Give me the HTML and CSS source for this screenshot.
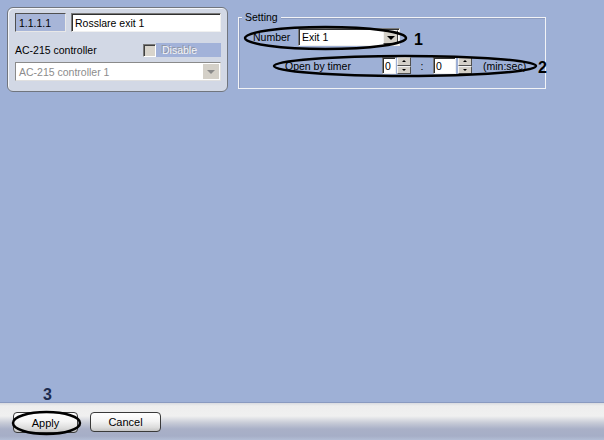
FILE: index.html
```html
<!DOCTYPE html>
<html lang="en">
  <head>
    <meta charset="UTF-8" />
    <title>Rosslare exit settings</title>
    <link rel="stylesheet" href="styles.css">
  </head>
  <body>
    <div class="window">
      <div class="content">
        <!-- Object panel -->
        <div class="panel">
          <div class="prow">
            <span class="idbox">1.1.1.1</span>
            <span class="field name">Rosslare exit 1</span>
          </div>
          <div class="prow ctrl">
            <span class="ctrl-label">AC-215 controller</span>
            <span class="check"></span>
            <span class="disable">Disable</span>
          </div>
          <div class="combo off">
            <span class="combo-text">AC-215 controller 1</span>
            <span class="combo-btn"><span class="arrow"></span></span>
          </div>
        </div>

        <!-- Setting group -->
        <div class="group">
          <span class="legend">Setting</span>
          <div class="grow number">
            <span class="glabel">Number</span>
            <div class="combo exit">
              <span class="combo-text">Exit 1</span>
              <span class="combo-btn"><span class="arrow"></span></span>
            </div>
          </div>
          <div class="grow timer">
            <span class="glabel wide">Open by timer</span>
            <span class="field spin-in small">0</span>
            <span class="spin"><span class="half up"></span><span class="half down"></span></span>
            <span class="colon">:</span>
            <span class="field spin-in">0</span>
            <span class="spin sec"><span class="half up"></span><span class="half down"></span></span>
            <span class="unit">(min:sec)</span>
          </div>
        </div>
      </div>

      <div class="footer">
        <button class="btn apply">Apply</button>
        <button class="btn cancel">Cancel</button>
      </div>

      <!-- callout marks drawn over the dialog -->
      <svg class="marks" width="604" height="440" viewBox="0 0 604 440">
        <ellipse cx="325.5" cy="38" rx="80.5" ry="11" />
        <ellipse cx="405" cy="66" rx="131" ry="10" />
        <ellipse cx="46.5" cy="423" rx="33.5" ry="11" />
        <text x="414" y="45">1</text>
        <text x="538" y="73">2</text>
        <text x="43" y="400" class="n3">3</text>
      </svg>
    </div>
  </body>
</html>
```

FILE: styles.css
```css
body {
  margin: 0;
  font-family: "Liberation Sans", Arial, sans-serif;
  font-size: 10.5px;
  color: #000;
}
.window {
  position: relative;
  width: 604px;
  height: 440px;
  background-color: #9eb0d6;
  overflow: hidden;
}
.content {
  height: 402px;
  display: flex;
  align-items: flex-start;
  gap: 10px;
  padding: 7px 0 0 7px;
  box-sizing: border-box;
}

/* left panel */
.panel {
  width: 221px;
  box-sizing: border-box;
  padding: 5px 6px 10px 7px;
  background-color: #d2d8e5;
  border: 1px solid #70757e;
  border-radius: 6px;
  box-shadow: inset 1px 1px 0 #f4f6fa;
}
.prow {
  display: flex;
  gap: 5px;
  height: 19px;
}
.field {
  display: flex;
  align-items: center;
  box-sizing: border-box;
  background-color: #fff;
  border: 1px solid;
  border-color: #7a7a7a #f0f0f0 #f0f0f0 #7a7a7a;
  box-shadow: inset 1px 1px 0 #303030;
  padding-left: 3px;
}
.idbox {
  display: flex;
  align-items: center;
  width: 51px;
  box-sizing: border-box;
  padding-left: 3px;
  background-color: #a7b5d8;
  border: 1px solid;
  border-color: #505050 #e8e8e8 #e8e8e8 #505050;
}
.name {
  width: 150px;
}
.prow.ctrl {
  margin-top: 11px;
  height: 14px;
  gap: 0;
  align-items: center;
}
.ctrl-label {
  flex: 1;
}
.check {
  width: 13px;
  height: 13px;
  box-sizing: border-box;
  background-color: #d8d4cc;
  border: 1px solid;
  border-color: #7a7a7a #fff #fff #7a7a7a;
  box-shadow: inset 1px 1px 0 #404040;
}
.disable {
  width: 65px;
  height: 14px;
  line-height: 14px;
  padding-left: 6px;
  box-sizing: border-box;
  background-color: #a2b2d9;
  color: #f4f4f4;
  text-shadow: -1px -1px 0 #8d93a0;
}

/* combo boxes */
.combo {
  display: flex;
  box-sizing: border-box;
  background-color: #fff;
  border: 1px solid;
  border-color: #7a7a7a #f0f0f0 #f0f0f0 #7a7a7a;
  box-shadow: inset 1px 1px 0 #303030;
  padding: 1px 1px 1px 2px;
}
.combo-text {
  flex: 1;
  display: flex;
  align-items: center;
  padding-left: 1px;
}
.combo-btn {
  width: 15px;
  display: flex;
  align-items: center;
  justify-content: center;
  background-color: #d4d0c8;
  border: 1px solid;
  border-color: #f4f4f4 #404040 #404040 #f4f4f4;
  box-sizing: border-box;
}
.arrow {
  border-left: 4px solid transparent;
  border-right: 4px solid transparent;
  border-top: 4px solid #000;
  margin-top: 1px;
}
.combo.off {
  margin-top: 5px;
  height: 19px;
  border-color: #8a8a8a #e0e0e0 #e0e0e0 #8a8a8a;
  box-shadow: none;
}
.combo.off .combo-text {
  color: #8c8c8c;
}
.combo.off .combo-btn {
  width: 16px;
  border-color: #d4d0c8;
}
.combo.off .arrow {
  border-top-color: #8a8a8a;
}

/* Setting group */
.group {
  position: relative;
  width: 308px;
  height: 72px;
  margin-top: 10px;
  box-sizing: border-box;
  border: 1px solid #f2f3f6;
  box-shadow: inset 1px 1px 0 #8d9cc0;
  padding: 10px 0 0 14px;
}
.legend {
  position: absolute;
  top: -7px;
  left: 3px;
  padding: 0 3px;
  line-height: 13px;
  background-color: #9eb0d6;
}
.grow {
  display: flex;
  align-items: stretch;
}
.grow.number {
  height: 18px;
}
.glabel {
  width: 45px;
  display: flex;
  align-items: center;
}
.glabel.wide {
  width: 97px;
}
.combo.exit {
  width: 102px;
}
.grow.timer {
  height: 17px;
  margin: 11px 0 0 32px;
}
.spin-in {
  width: 23px;
  padding-left: 2px;
}
.spin-in.small {
  width: 14px;
}
.spin {
  display: flex;
  flex-direction: column;
  width: 14px;
  margin-left: 1px;
}
.spin.sec {
  margin-left: 2px;
}
.half {
  flex: 1;
  display: flex;
  align-items: center;
  justify-content: center;
  background-color: #d4d0c8;
  border: 1px solid;
  border-color: #f4f4f4 #505050 #505050 #f4f4f4;
}
.half::after {
  content: "";
  border-left: 2px solid transparent;
  border-right: 2px solid transparent;
}
.half.up::after {
  border-bottom: 2px solid #000;
}
.half.down::after {
  border-top: 2px solid #000;
}
.colon {
  width: 22px;
  display: flex;
  align-items: center;
  justify-content: center;
}
.unit {
  display: flex;
  align-items: center;
  margin-left: 11px;
}

/* bottom bar */
.footer {
  height: 38px;
  display: flex;
  align-items: flex-start;
  gap: 12px;
  padding: 10px 0 0 13px;
  box-sizing: border-box;
  background: linear-gradient(to bottom, #8a9ac0 0, #8a9ac0 1px, #d9dbe0 1px, #eeeeee 4px, #f0f0f0 14px, #c6cad6 21px, #a9b0c7 27px, #a6aec7 34px, #b2bdd5 38px);
}
.btn {
  width: 65px;
  height: 21px;
  padding: 0;
  font-family: "Liberation Sans", Arial, sans-serif;
  font-size: 11px;
  color: #000;
  border: 1px solid #3a3a3a;
  border-radius: 4px;
  background: linear-gradient(to bottom, #ffffff 0, #f4f4f4 45%, #dcdcdc 80%, #c4c4c4 100%);
}
.btn.cancel {
  width: 71px;
  height: 20px;
}

/* annotation overlay */
.marks {
  position: absolute;
  left: 0;
  top: 0;
  pointer-events: none;
}
.marks ellipse {
  fill: none;
  stroke: #000;
  stroke-width: 2.5;
}
.marks text {
  font-family: "Liberation Sans", Arial, sans-serif;
  font-size: 16px;
  font-weight: bold;
  fill: #000;
}
.marks .n3 {
  fill: #1c2b4f;
}
```
